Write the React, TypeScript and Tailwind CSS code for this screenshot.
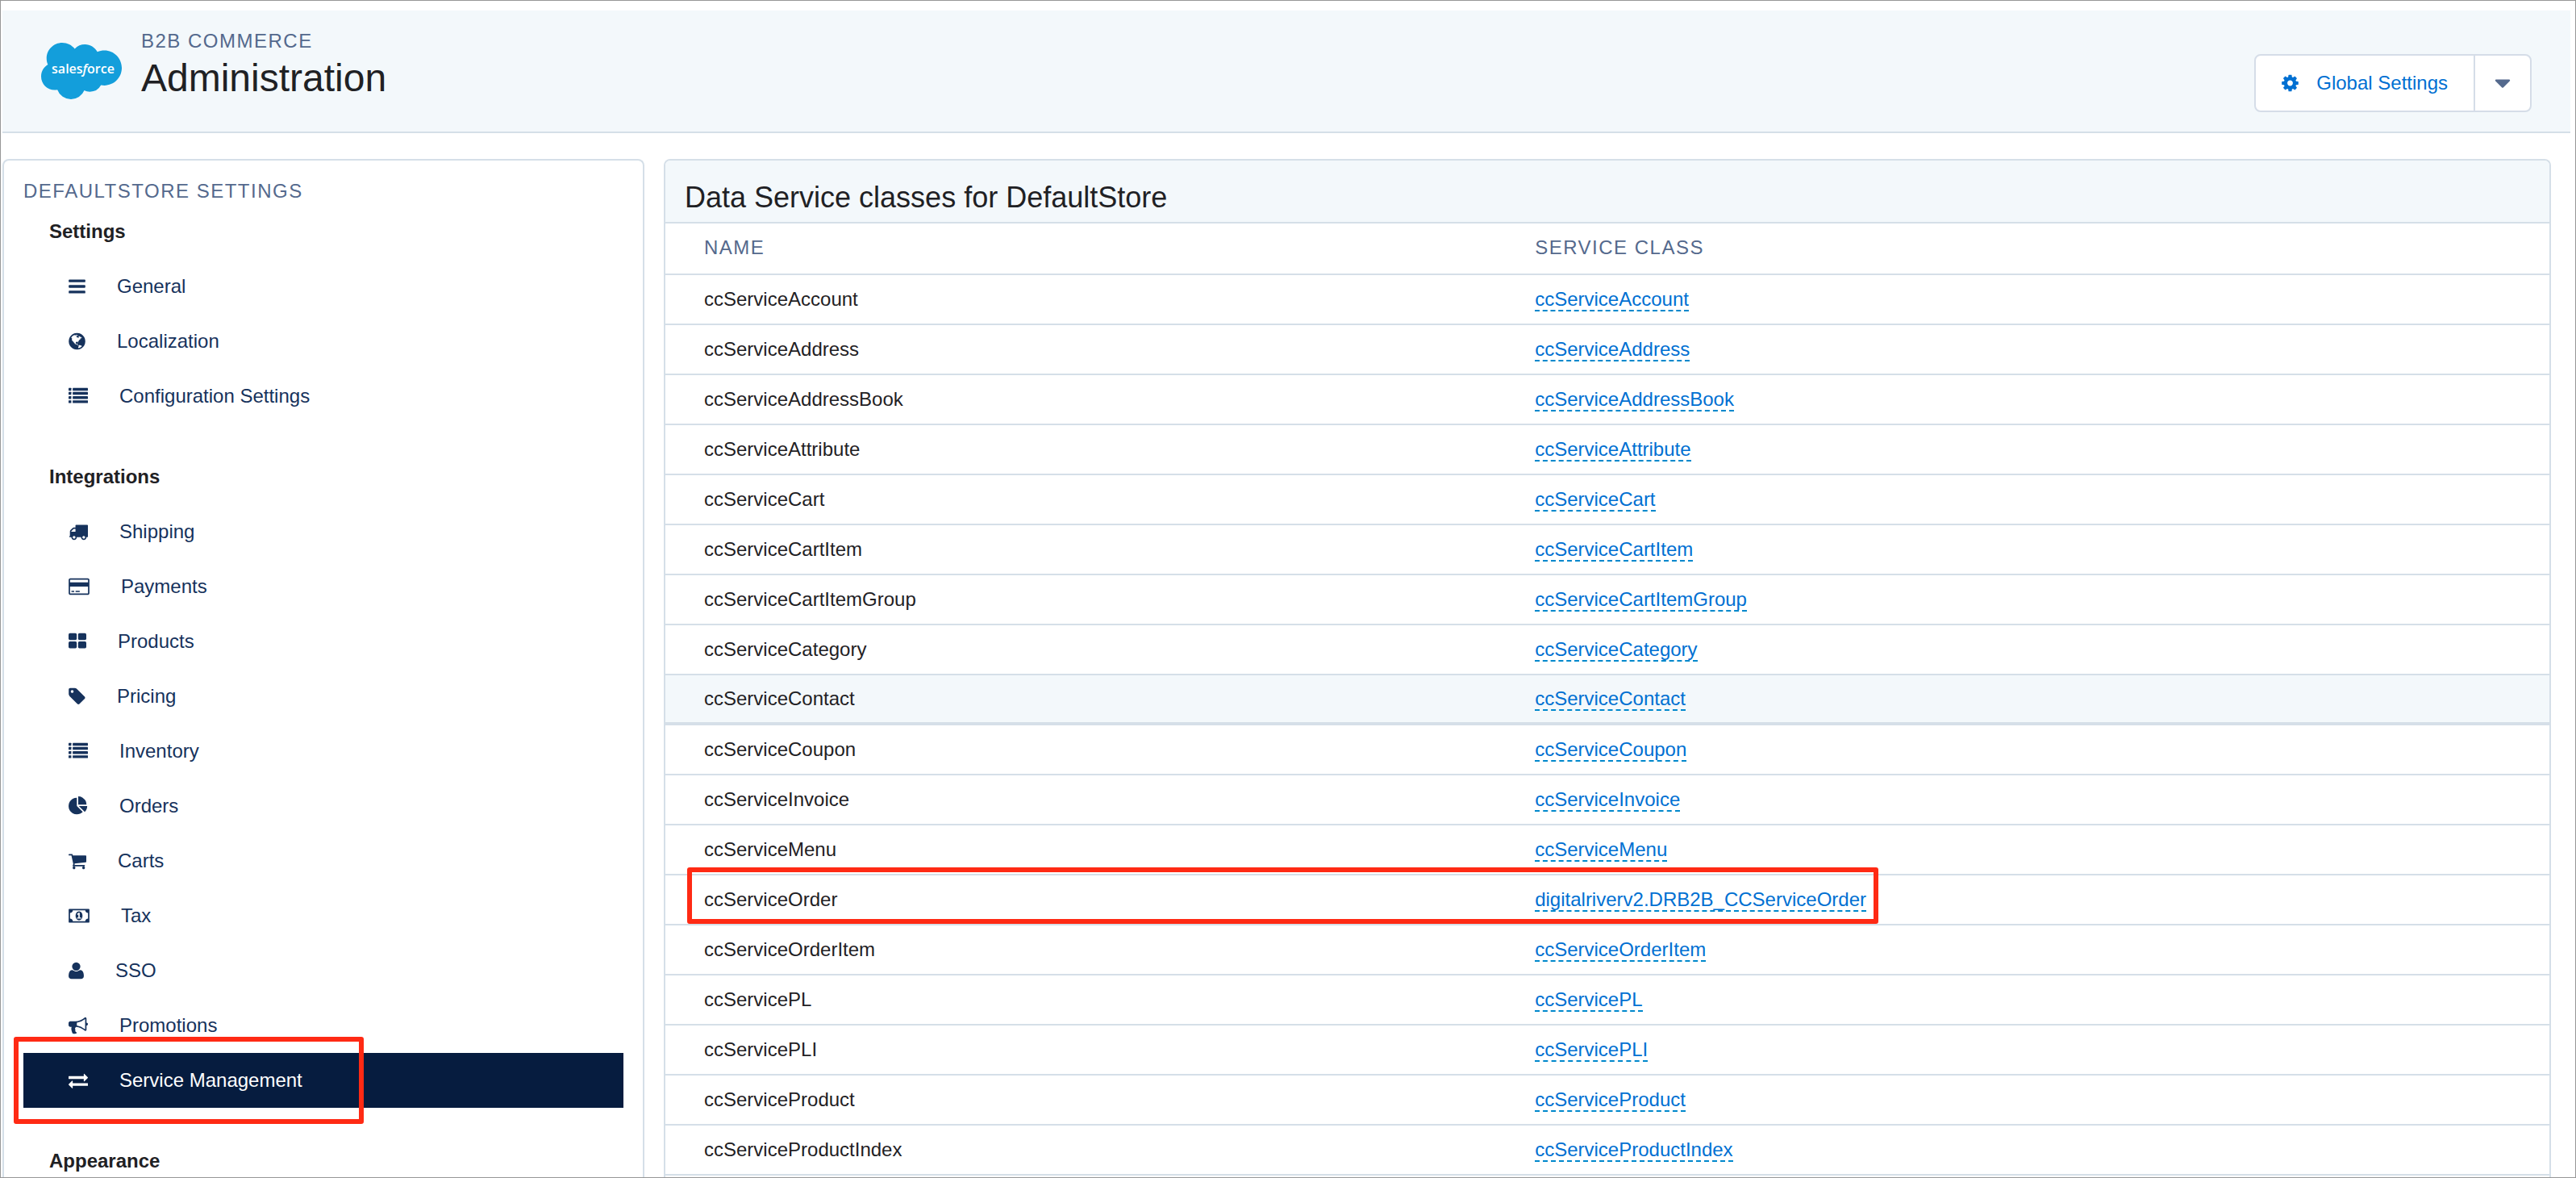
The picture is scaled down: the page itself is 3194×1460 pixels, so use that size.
import type { ReactNode } from "react";

type IconProps = { viewBox: string; className: string; children: ReactNode };

function Icon({ viewBox, className, children }: IconProps) {
  return (
    <svg viewBox={viewBox} className={className} fill="currentColor" fillRule="nonzero" aria-hidden="true">
      {children}
    </svg>
  );
}

const narrow = "h-6 w-[21px] shrink-0";
const medium = "h-6 w-[22px] shrink-0";
const wide = "h-6 w-6 shrink-0";
const widest = "h-6 w-[26px] shrink-0";

function BarsIcon() {
  return (
    <Icon viewBox="128 0 1536 1792" className={narrow}>
      <rect x="128" y="256" width="1536" height="256" rx="64" />
      <rect x="128" y="768" width="1536" height="256" rx="64" />
      <rect x="128" y="1280" width="1536" height="256" rx="64" />
    </Icon>
  );
}

function GlobeIcon() {
  return (
    <Icon viewBox="128 0 1536 1792" className={narrow}>
      <path d="M896 128q209 0 385.5 103t279.5 279.5 103 385.5-103 385.5-279.5 279.5-385.5 103-385.5-103-279.5-279.5-103-385.5 103-385.5 279.5-279.5 385.5-103zm274 521q-2 1-9.5 9.5t-13.5 9.5q2 0 4.5-5t5-11 3.5-7q6-7 22-15 14-6 52-12 34-8 51 11-2-2 9.5-13t14.5-12q3-2 15-4.5t15-7.5l2-22q-12 1-17.5-7t-6.5-21q0 2-6 8 0-7-4.5-8t-11.5 1-9 1q-10-3-15-7.5t-8-16.5-4-15q-2-5-9.5-11t-9.5-10q-1-2-2.5-5.5t-3-6.5-4-5.5-5.5-2.5-7 5-7.5 10-4.5 5q-3-2-6-1.5t-4.5 1-4.5 3-5 3.5q-3 2-8.5 3t-8.5 2q15-5-1-11-10-4-16-3 9-4 7.5-12t-8.5-14h5q-1-4-8.5-8.5t-17.5-8.5-13-6q-8-5-34-9.5t-33-.5q-5 6-4.5 10.5t4 14 3.5 12.5q1 6-5.5 13t-6.5 12q0 7 14 15.5t10 21.5q-3 8-16 16t-16 12q-5 8-1.5 18.5t10.5 16.5q2 2 1.5 4t-3.5 4.5-5.5 4-6.5 3.5l-3 2q-11 5-20.5-6t-13.5-26q-7-25-16-30-23-8-29 1-5-13-41-26-25-9-58-4 6-1 0-15-7-15-19-12 3-6 4-17.5t1-13.5q3-13 12-23 1-1 7-8.5t9.5-13.5.5-6q35 4 50-11 5-5 11.5-17t10.5-17q9-6 14-5.5t14.5 5.5 14.5 5q14 1 15.5-11t-7.5-20q12 1 3-17-4-7-8-9-12-4-27 5-8 4 2 8-1-1-9.5 10.5t-16.5 17.5-16-5q-1-1-5.5-13.5t-9.5-13.5q-8 0-16 15 3-8-11-15t-24-8q19-12-8-27-7-4-20.5-5t-19.5 4q-5 7-5.5 11.5t5 8 10.5 5.5 11.5 4 8.5 3q14 10 8 14-2 1-8.5 3.5t-11.5 4.5-6 4q-3 4 0 14t-2 14q-5-5-9-17.5t-7-16.5q7 9-25 6l-10-1q-4 0-16 2t-20.5 1-13.5-8q-4-8 0-20 1-4 4-2-4-3-11-9.5t-10-8.5q-46 15-94 41 6 1 12-1 5-2 13-6.5t10-5.5q34-14 42-7l5-5q14 16 20 25-7-4-30-1-20 6-22 12 7 12 5 18-4-3-11.5-10t-14.5-11-15-5q-16 0-22 1-146 80-235 222 7 7 12 8 4 1 5 9t2.5 11 11.5-3q9 8 3 19 1-1 44 27 19 17 21 21 3 11-10 18-1-2-9-9t-9-4q-3 5 .5 18.5t10.5 12.5q-7 0-9.5 16t-2.5 35.5-1 23.5l2 1q-3 12 5.5 34.5t21.5 19.5q-13 3 20 43 6 8 8 9 3 2 12 7.5t15 10 10 10.5q4 5 10 22.5t14 23.5q-2 6 9.5 20t10.5 23q-1 0-2.5 1t-2.5 1q3 7 15.5 14t15.5 13q1 3 2 10t3 11 8 2q2-20-24-62-15-25-17-29-3-5-5.5-15.5t-4.5-14.5q2 0 6 1.5t8.5 3.5 7.5 4 2 3q-3 7 2 17.5t12 18.5 17 19 12 13q6 6 14 19.5t0 13.5q9 0 20 10t17 20q5 8 8 26t5 24q2 7 8.5 13.5t12.5 9.5l16 8 13 7q5 2 18.5 10.5t21.5 11.5q10 4 16 4t14.5-2.5 13.5-3.5q15-2 29 15t21 21q36 19 55 11-2 1 .5 7.5t8 15.5 9 14.5 5.5 8.5q5 6 18 15t18 15q6-4 7-9-3 8 7 20t18 10q14-3 14-32-31 15-49-18 0-1-2.5-5.5t-4-8.5-2.5-8.5 0-7.5 5-3q9 0 10-3.5t-2-12.5-4-13q-1-8-11-20t-12-15q-5 9-16 8t-16-9q0 1-1.5 5.5t-1.5 6.5q-13 0-15-1 1-3 2.5-17.5t3.5-22.5q1-4 5.5-12t7.5-14.5 4-12.5-4.5-9.5-17.5-2.5q-19 1-26 20-1 3-3 10.5t-5 11.5-9 7q-7 3-24 2t-24-5q-13-8-22.5-29t-9.5-37q0-10 2.5-26.5t3-25-5.5-24.5q3-2 9-9.5t10-10.5q2-1 4.5-1.5t4.5 0 4-1.5 3-6q-1-1-4-3-3-3-4-3 7 3 28.5-1.5t27.5 1.5q15 11 22-2 0-1-2.5-9.5t-.5-13.5q5 27 29 9 3 3 15.5 5t17.5 5q3 2 7 5.5t5.5 4.5 5-.5 8.5-6.5q10 14 12 24 11 40 19 44 7 3 11 2t4.5-9.5 0-14-1.5-12.5l-1-8v-18l-1-8q-15-3-18.5-12t1.5-18.5 15-18.5q1-1 8-3.5t15.5-6.5 12.5-8q21-19 15-35 7 0 11-9-1 0-5-3t-7.5-5-4.5-2q9-5 2-16 5-3 7.5-11t7.5-10q9 12 21 2 7-8 1-16 5-7 20.5-10.5t18.5-9.5q7 2 8-2t1-12 3-12q4-5 15-9t13-5l17-11q3-4 0-4 18 2 31-11 10-11-6-20 3-6-3-9.5t-15-5.5q3-1 11.5-.5t10.5-1.5q15-10-7-16-17-5-43 12zm-163 877q206-36 351-189-3-3-12.5-4.5t-12.5-3.5q-18-7-24-8 1-7-2.5-13t-8-9-12.5-8-11-7q-2-2-7-6t-7-5.5-7.5-4.5-8.5-2-10 1l-3 1q-3 1-5.5 2.5t-5.5 3-4 3 0 2.5q-21-17-36-22-5-1-11-5.5t-10.5-7-10-1.5-11.5 7q-5 5-6 15t-2 13q-7-5 0-17.5t2-18.5q-3-6-10.5-4.5t-12 4.5-11.5 8.5-9 6.5-8.5 5.5-8.5 7.5q-3 4-6 12t-5 11q-2-4-11.5-6.5t-9.5-5.5q2 10 4 35t5 38q7 31-12 48-27 25-29 40-4 22 12 26 0 7-8 20.5t-7 21.5q0 6 2 16z" />
    </Icon>
  );
}

function ListIcon() {
  return (
    <Icon viewBox="0 0 1792 1792" className={wide}>
      {[128, 512, 896, 1280].map((y) => (
        <g key={y}>
          <rect x="0" y={y} width="256" height="256" rx="32" />
          <rect x="384" y={y} width="1408" height="256" rx="32" />
        </g>
      ))}
    </Icon>
  );
}

function TruckIcon() {
  return (
    <Icon viewBox="0 0 1792 1792" className={wide}>
      <path d="M640 1408q0-52-38-90t-90-38-90 38-38 90 38 90 90 38 90-38 38-90zm-384-512h384v-256h-158q-13 0-22 9l-195 195q-9 9-9 22v30zm1280 512q0-52-38-90t-90-38-90 38-38 90 38 90 90 38 90-38 38-90zm256-1088v1024q0 15-4 26.5t-13.5 18.5-16.5 11.5-23.5 6-22.5 2-25.5 0-22.5-.5q0 106-75 181t-181 75-181-75-75-181h-384q0 106-75 181t-181 75-181-75-75-181h-64q-3 0-22.5.5t-25.5 0-22.5-2-23.5-6-16.5-11.5-13.5-18.5-4-26.5q0-26 19-45t45-19v-320q0-8-.5-35t0-38 2.5-34.5 6.5-37 14-30.5 22.5-30l198-198q19-19 50.5-32t58.5-13h160v-192q0-26 19-45t45-19h1024q26 0 45 19t19 45z" />
    </Icon>
  );
}

function CreditCardIcon() {
  return (
    <Icon viewBox="0 0 1920 1792" className={widest}>
      <path d="M1760 128q66 0 113 47t47 113v1216q0 66-47 113t-113 47h-1600q-66 0-113-47t-47-113v-1216q0-66 47-113t113-47h1600zm-1600 128q-13 0-22.5 9.5t-9.5 22.5v224h1664v-224q0-13-9.5-22.5t-22.5-9.5h-1600zm1600 1280q13 0 22.5-9.5t9.5-22.5v-608h-1664v608q0 13 9.5 22.5t22.5 9.5h1600zm-1504-128v-128h256v128h-256zm384 0v-128h384v128h-384z" />
    </Icon>
  );
}

function TilesIcon() {
  return (
    <Icon viewBox="64 0 1664 1792" className={medium}>
      <rect x="64" y="128" width="768" height="640" rx="128" />
      <rect x="960" y="128" width="768" height="640" rx="128" />
      <rect x="64" y="896" width="768" height="640" rx="128" />
      <rect x="960" y="896" width="768" height="640" rx="128" />
    </Icon>
  );
}

function TagIcon() {
  return (
    <Icon viewBox="128 0 1536 1792" className={narrow}>
      <path d="M576 448q0-53-37.5-90.5t-90.5-37.5-90.5 37.5-37.5 90.5 37.5 90.5 90.5 37.5 90.5-37.5 37.5-90.5zm1067 576q0 53-37 90l-491 492q-39 37-91 37-53 0-90-37l-715-716q-38-37-64.5-101t-26.5-117v-416q0-52 38-90t90-38h416q53 0 117 26.5t102 64.5l715 714q37 39 37 91z" />
    </Icon>
  );
}

function PieChartIcon() {
  return (
    <Icon viewBox="0 0 1792 1792" className={wide}>
      <path d="M768 890l546 546q-106 108-247.5 168t-298.5 60q-209 0-385.5-103t-279.5-279.5-103-385.5 103-385.5 279.5-279.5 385.5-103v762zm187 6h773q0 157-60 298.5t-168 247.5zm709-128h-768v-768q209 0 385.5 103t279.5 279.5 103 385.5z" />
    </Icon>
  );
}

function CartIcon() {
  return (
    <Icon viewBox="64 0 1664 1792" className={medium}>
      <path d="M704 1536q0 52-38 90t-90 38-90-38-38-90 38-90 90-38 90 38 38 90zm896 0q0 52-38 90t-90 38-90-38-38-90 38-90 90-38 90 38 38 90zm128-1088v512q0 24-16.5 42.5t-40.5 21.5l-1044 122q13 60 13 70 0 16-24 64h920q26 0 45 19t19 45-19 45-45 19h-1024q-26 0-45-19t-19-45q0-11 8-31.5t16-36 21.5-40 15.5-29.5l-177-823h-204q-26 0-45-19t-19-45 19-45 45-19h256q16 0 28.5 6.5t19.5 15.5 13 24.5 8 26 5.5 29.5 4.5 26h1201q26 0 45 19t19 45z" />
    </Icon>
  );
}

function MoneyIcon() {
  return (
    <Icon viewBox="-64 0 1920 1792" className={widest}>
      <path d="M704 1152h384v-96h-128v-448h-114l-148 137 77 80q42-37 55-57h2v288h-128v96zm512-256q0 70-21 142t-59.5 134-101.5 101-138 39-138-39-101.5-101-59.5-134-21-142 21-142 59.5-134 101.5-101 138-39 138 39 101.5 101 59.5 134 21 142zm512 256v-512q-106 0-181-75t-75-181h-1152q0 106-75 181t-181 75v512q106 0 181 75t75 181h1152q0-106 75-181t181-75zm128-832v1152q0 26-19 45t-45 19h-1792q-26 0-45-19t-19-45v-1152q0-26 19-45t45-19h1792q26 0 45 19t19 45z" fillRule="evenodd" />
    </Icon>
  );
}

function UserIcon() {
  return (
    <Icon viewBox="192 0 1408 1792" className="h-6 w-[19px] shrink-0">
      <path d="M1600 1405q0 120-73 189.5t-194 69.5h-874q-121 0-194-69.5t-73-189.5q0-53 3.5-103.5t14-109 26.5-108.5 43-97.5 62-81 85.5-53.5 111.5-20q9 0 42 21.5t74.5 48 108 48 133.5 21.5 133.5-21.5 108-48 74.5-48 42-21.5q61 0 111.5 20t85.5 53.5 62 81 43 97.5 26.5 108.5 14 109 3.5 103.5zm-320-893q0 159-112.5 271.5t-271.5 112.5-271.5-112.5-112.5-271.5 112.5-271.5 271.5-112.5 271.5 112.5 112.5 271.5z" />
    </Icon>
  );
}

function BullhornIcon() {
  return (
    <Icon viewBox="0 0 1792 1792" className={wide}>
      <path d="M1664 640q53 0 90.5 37.5t37.5 90.5-37.5 90.5-90.5 37.5v384q0 52-38 90t-90 38q-417-347-812-380-58 19-91 66t-31 100.5 40 92.5q-20 33-23 65.5t6 58 33.5 55 48 50 61.5 50.5q-29 58-111.5 83t-168.5 11.5-132-55.5q-7-23-29.5-87.5t-32-94.5-23-89-15-101 3.5-98.5 22-110.5h-122q-66 0-113-47t-47-113v-192q0-66 47-113t113-47h480q435 0 896-384 52 0 90 38t38 90v384zm-128 604v-954q-394 302-768 343v270q377 42 768 341z" />
    </Icon>
  );
}

function ExchangeIcon() {
  return (
    <Icon viewBox="0 0 1792 1792" className={wide}>
      <path d="M1792 1184v192q0 13-9.5 22.5t-22.5 9.5h-1376v192q0 13-9.5 22.5t-22.5 9.5q-12 0-24-10l-319-320q-9-9-9-22 0-14 9-23l320-320q9-9 23-9 13 0 22.5 9.5t9.5 22.5v192h1376q13 0 22.5 9.5t9.5 22.5zm0-544q0 14-9 23l-320 320q-9 9-23 9-13 0-22.5-9.5t-9.5-22.5v-192h-1376q-13 0-22.5-9.5t-9.5-22.5v-192q0-13 9.5-22.5t22.5-9.5h1376v-192q0-14 9-23t23-9q12 0 24 10l319 319q9 9 9 23z" />
    </Icon>
  );
}

function CogIcon() {
  return (
    <Icon viewBox="128 0 1536 1792" className={narrow}>
      <path d="M1152 896q0-106-75-181t-181-75-181 75-75 181 75 181 181 75 181-75 75-181zm512-109v222q0 12-8 23t-20 13l-185 28q-19 54-39 91 35 50 107 138 10 12 10 25t-9 23q-27 37-99 108t-94 71q-12 0-26-9l-138-108q-44 23-91 38-16 136-29 186-7 28-36 28h-222q-14 0-24.5-8.5t-11.5-21.5l-28-184q-49-16-90-37l-141 107q-10 9-25 9-14 0-25-11-126-114-165-168-7-10-7-23 0-12 8-23 15-21 51-66.5t54-70.5q-27-50-41-99l-183-27q-13-2-21-12.5t-8-23.5v-222q0-12 8-23t19-13l186-28q14-46 39-92-40-57-107-138-10-12-10-24 0-10 9-23 26-36 98.5-107.5t94.5-71.5q13 0 26 10l138 107q44-23 91-38 16-136 29-186 7-28 36-28h222q14 0 24.5 8.5t11.5 21.5l28 184q49 16 90 37l142-107q9-9 24-9 13 0 25 10 129 119 165 170 7 8 7 22 0 12-8 23-15 21-51 66.5t-54 70.5q26 50 41 98l183 28q13 2 21 12.5t8 23.5z" />
    </Icon>
  );
}

function CaretDownIcon() {
  return (
    <Icon viewBox="0 0 1792 1792" className="h-8 w-8">
      <path d="M1408 704q0 26-19 45l-448 448q-19 19-45 19t-45-19l-448-448q-19-19-19-45t19-45 45-19h896q26 0 45 19t19 45z" />
    </Icon>
  );
}

function Logo() {
  return (
    <svg viewBox="0 0 100 70" className="mt-5 h-[70px] w-[100px] shrink-0" role="img" aria-label="Salesforce">
      <path
        transform="scale(4.1667) translate(0 -3.6)"
        fill="#139edb"
        d="M10.006 5.415a4.195 4.195 0 013.045-1.306c1.56 0 2.954.9 3.69 2.205.63-.3 1.35-.45 2.1-.45 2.85 0 5.159 2.34 5.159 5.22s-2.31 5.22-5.176 5.22c-.345 0-.69-.044-1.02-.104a3.75 3.75 0 01-3.3 1.95c-.6 0-1.155-.15-1.65-.375A4.314 4.314 0 018.88 20.4a4.302 4.302 0 01-4.05-2.82c-.27.062-.54.076-.825.076-2.204 0-4.005-1.8-4.005-4.05 0-1.5.811-2.805 2.01-3.51-.255-.57-.39-1.2-.39-1.846 0-2.58 2.1-4.65 4.65-4.65 1.53 0 2.85.705 3.72 1.8"
      />
      <text x="52" y="38" textAnchor="middle" fill="#ffffff" className="font-['Open_Sans',sans-serif] text-[16px] font-semibold">
        sales<tspan fontStyle="italic">f</tspan>orce
      </text>
    </svg>
  );
}

type Item = { label: string; icon: () => ReactNode; active?: boolean };

const sections: { title: string; items: Item[] }[] = [
  {
    title: "Settings",
    items: [
      { label: "General", icon: BarsIcon },
      { label: "Localization", icon: GlobeIcon },
      { label: "Configuration Settings", icon: ListIcon },
    ],
  },
  {
    title: "Integrations",
    items: [
      { label: "Shipping", icon: TruckIcon },
      { label: "Payments", icon: CreditCardIcon },
      { label: "Products", icon: TilesIcon },
      { label: "Pricing", icon: TagIcon },
      { label: "Inventory", icon: ListIcon },
      { label: "Orders", icon: PieChartIcon },
      { label: "Carts", icon: CartIcon },
      { label: "Tax", icon: MoneyIcon },
      { label: "SSO", icon: UserIcon },
      { label: "Promotions", icon: BullhornIcon },
      { label: "Service Management", icon: ExchangeIcon, active: true },
    ],
  },
  { title: "Appearance", items: [] },
];

type Service = { name: string; target?: string; hovered?: boolean; marked?: boolean };

const services: Service[] = [
  { name: "ccServiceAccount" },
  { name: "ccServiceAddress" },
  { name: "ccServiceAddressBook" },
  { name: "ccServiceAttribute" },
  { name: "ccServiceCart" },
  { name: "ccServiceCartItem" },
  { name: "ccServiceCartItemGroup" },
  { name: "ccServiceCategory" },
  { name: "ccServiceContact", hovered: true },
  { name: "ccServiceCoupon" },
  { name: "ccServiceInvoice" },
  { name: "ccServiceMenu" },
  { name: "ccServiceOrder", target: "digitalriverv2.DRB2B_CCServiceOrder", marked: true },
  { name: "ccServiceOrderItem" },
  { name: "ccServicePL" },
  { name: "ccServicePLI" },
  { name: "ccServiceProduct" },
  { name: "ccServiceProductIndex" },
];

const highlight = "pointer-events-none absolute z-10 rounded-[3px] border-[6px] border-[#ff2a14]";

function NavItem({ label, icon: ItemIcon, active }: Item) {
  return (
    <li className="relative">
      <a
        href="#"
        aria-current={active ? "page" : undefined}
        className={
          active
            ? "flex h-[68px] items-center gap-[39px] bg-[#061c3f] pl-14 text-white"
            : "flex h-[68px] items-center gap-[39px] pl-14 text-[#16325c]"
        }
      >
        <ItemIcon />
        <span>{label}</span>
      </a>
      {active && <span className={`${highlight} -left-3 -top-5 h-[108px] w-[434px]`} />}
    </li>
  );
}

function Sidebar() {
  return (
    <nav className="w-1/4 shrink-0 rounded-t-lg border-2 border-b-0 border-[#d5dfe8] bg-white px-6 pt-5">
      <h2 className="mb-3.5 tracking-[0.0625em] text-[#54698d]">DEFAULTSTORE SETTINGS</h2>
      <div className="flex flex-col gap-12">
        {sections.map((section) => (
          <section key={section.title}>
            <h3 className="mb-4 pl-8 font-bold text-[#1f2124]">{section.title}</h3>
            <ul>
              {section.items.map((item) => (
                <NavItem key={item.label} {...item} />
              ))}
            </ul>
          </section>
        ))}
      </div>
    </nav>
  );
}

function ServiceRow({ name, target, hovered, marked }: Service) {
  const line = hovered ? "border-b-4 bg-[#f3f8fb]" : "border-b-2";
  return (
    <tr className="h-[62px]">
      <td className={`relative border-[#d5dfe8] pl-12 ${line}`}>
        {name}
        {marked && <span className={`${highlight} -top-2.5 left-[27px] h-[70px] w-[1477px]`} />}
      </td>
      <td className={`border-[#d5dfe8] pl-12 ${line}`}>
        <a href="#" className="border-b-2 border-dashed border-[#0088cc] text-[#0070d2]">
          {target ?? name}
        </a>
      </td>
    </tr>
  );
}

function ServicePanel() {
  return (
    <main className="min-w-0 flex-1 rounded-t-lg border-2 border-b-0 border-[#d5dfe8] bg-white">
      <div className="rounded-t-md border-b-2 border-[#d5dfe8] bg-[#f3f8fb] px-6 pt-[22px] pb-1.5">
        <h2 className="text-4xl leading-[48px]">Data Service classes for DefaultStore</h2>
      </div>
      <table className="w-full table-fixed border-separate border-spacing-0">
        <thead>
          <tr className="text-left tracking-[0.0625em] text-[#54698d]">
            <th scope="col" className="w-[44.1%] border-b-2 border-[#d5dfe8] pt-3 pb-3.5 pl-12 font-normal">NAME</th>
            <th scope="col" className="border-b-2 border-[#d5dfe8] pt-3 pb-3.5 pl-12 font-normal">SERVICE CLASS</th>
          </tr>
        </thead>
        <tbody>
          {services.map((service) => (
            <ServiceRow key={service.name} {...service} />
          ))}
        </tbody>
      </table>
    </main>
  );
}

function PageHeader() {
  return (
    <header className="flex items-start border-b-2 border-[#d5dfe8] bg-[#f3f8fb] px-12 pt-5 pb-6">
      <Logo />
      <div className="ml-6">
        <p className="tracking-[0.0625em] text-[#54698d]">B2B COMMERCE</p>
        <h1 className="text-5xl leading-[56px]">Administration</h1>
      </div>
      <div className="mt-[34px] ml-auto flex h-[72px] rounded-lg border-2 border-[#d5dde8] bg-white">
        <button type="button" className="flex items-center gap-[22px] px-8 text-[#0070d2]">
          <CogIcon />
          Global Settings
        </button>
        <button
          type="button"
          aria-label="More settings"
          className="flex w-[70px] items-center justify-center border-l-2 border-[#d5dde8] text-[#54698d]"
        >
          <CaretDownIcon />
        </button>
      </div>
    </header>
  );
}

export default function App() {
  return (
    <div className="flex h-screen flex-col overflow-hidden border border-[#979797] bg-white pt-3 pr-1.5 pl-0.5 font-['Liberation_Sans',Arial,sans-serif] text-2xl leading-9 text-[#1f2124]">
      <PageHeader />
      <div className="mt-8 flex min-h-0 flex-1">
        <Sidebar />
        <div className="flex min-w-0 flex-1 px-6">
          <ServicePanel />
        </div>
      </div>
    </div>
  );
}
